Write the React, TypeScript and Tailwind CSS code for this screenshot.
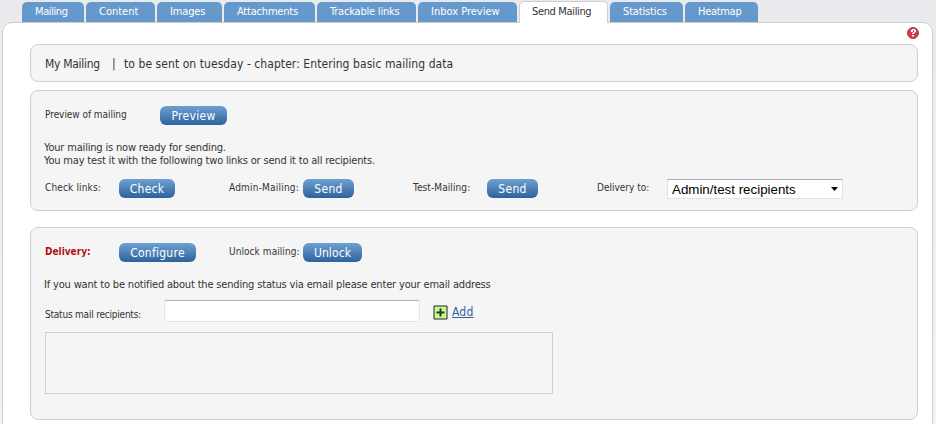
import React from "react";
import clsx from "clsx";

const tabs = [
  { label: "Mailing", size: "w-[62px] pl-[13px] tracking-[-0.4px]" },
  { label: "Content", size: "w-[69px] pl-[13px]" },
  { label: "Images", size: "w-[65px] pl-[13px] tracking-[-0.15px]" },
  { label: "Attachments", size: "w-[91px] pl-[13px] tracking-[-0.2px]" },
  { label: "Trackable links", size: "w-[99px] pl-[13px] tracking-[-0.2px]" },
  { label: "Inbox Preview", size: "w-[99px] pl-[13px]" },
  { label: "Send Mailing", size: "w-[89px] pl-[12px] tracking-[-0.35px]", active: true },
  { label: "Statistics", size: "w-[73px] pl-[13px] tracking-[-0.15px]" },
  { label: "Heatmap", size: "w-[73px] pl-[13px] tracking-[-0.3px]" },
];

function Tab({ label, size, active }: { label: string; size: string; active?: boolean }) {
  return (
    <a
      className={clsx(
        "block shrink-0 text-[11px]",
        size,
        active
          ? "relative mb-[-1px] h-[22px] rounded-t-[5px] border border-b-0 border-[#cfcfcf] bg-white leading-[20px] text-[#333]"
          : "h-[20px] rounded-t-[5px] bg-[#6699cb] leading-[20px] text-white"
      )}
    >
      {label}
    </a>
  );
}

function Button({ children, className }: { children: string; className: string }) {
  return (
    <button
      className={clsx(
        "block h-[19px] shrink-0 rounded-[6px] bg-linear-to-b from-[#6fa0d2] to-[#2c639c] text-center text-[12px] leading-[18px] text-white",
        className
      )}
    >
      {children}
    </button>
  );
}

function Label({ children, className }: { children: string; className: string }) {
  return <span className={clsx("block shrink-0 text-[10px] leading-[18px]", className)}>{children}</span>;
}

function Panel({ children, className }: { children: React.ReactNode; className: string }) {
  return (
    <section className={clsx("rounded-[8px] border border-[#cfcfcf] bg-[#f5f5f5] pl-[14px]", className)}>
      {children}
    </section>
  );
}

export default function App() {
  return (
    <div className="h-[424px] w-[936px] overflow-hidden whitespace-nowrap bg-linear-to-b from-[#e9eaee] to-[#f3f3f7] font-['DejaVu_Sans_Condensed','DejaVu_Sans',sans-serif] text-[#333] [font-stretch:condensed]">
      <nav className="flex h-[22px] items-end gap-[2px] pl-[22px]">
        {tabs.map((t) => (
          <Tab key={t.label} {...t} />
        ))}
      </nav>
      <main className="ml-[2px] h-[420px] w-[931px] rounded-t-[10px] border border-[#cfcfcf] bg-white pl-[27px] pr-[14px]">
        <div className="flex h-[21px] justify-end pt-[4px]">
          <svg width="12" height="12" viewBox="0 0 12 12" className="mr-[-1px]">
            <circle cx="6" cy="6" r="5.5" fill="#e8354f" stroke="#6b5566" />
            <path d="M4 5V3h1V2h3v1h1v2H8v1H7v1H5V6h1V5h1V3H6v2z" fill="#fff" />
            <path d="M5 8h2v1.6H5z" fill="#fff" />
          </svg>
        </div>
        <Panel className="flex h-[38px] w-[888px] text-[12px] leading-[38px]">
          <span className="w-[67px] tracking-[-0.3px]">My Mailing</span>
          <span className="w-[12px]">|</span>
          <span className="tracking-[0.065px]">to be sent on tuesday - chapter: Entering basic mailing data</span>
        </Panel>
        <Panel className="mt-[8px] h-[121px] w-[888px]">
          <div className="flex pt-[15px]">
            <Label className="w-[115px] tracking-[-0.05px]">Preview of mailing</Label>
            <Button className="w-[67px] tracking-[0.3px]">Preview</Button>
          </div>
          <p className="mt-[16px] ml-[-1px] h-[38px] text-[11px] leading-[13px] tracking-[-0.18px]">
            Your mailing is now ready for sending.
            <br />
            You may test it with the following two links or send it to all recipients.
          </p>
          <div className="flex">
            <Label className="w-[74px] tracking-[0.15px]">Check links:</Label>
            <Button className="w-[56px] tracking-[0.25px]">Check</Button>
            <Label className="ml-[54px] w-[74px] tracking-[0.2px]">Admin-Mailing:</Label>
            <Button className="w-[51px] tracking-[0.3px]">Send</Button>
            <Label className="ml-[59px] w-[74px] tracking-[0.1px]">Test-Mailing:</Label>
            <Button className="w-[51px] tracking-[0.3px]">Send</Button>
            <Label className="ml-[59px] w-[70px]">Delivery to:</Label>
            <div className="flex h-[20px] w-[176px] items-center justify-between rounded-[1px] border border-[#e2e3ea] border-t-[#abadb3] bg-white pr-[4px] pl-[4px] font-['Liberation_Sans',Arial,sans-serif] text-[13.33px] leading-[19px] text-black">
              <span>Admin/test recipients</span>
              <svg width="7" height="4" viewBox="0 0 7 4">
                <path d="M0 0h7L3.5 4z" fill="#000" />
              </svg>
            </div>
          </div>
        </Panel>
        <Panel className="mt-[16px] h-[193px] w-[888px]">
          <div className="flex pt-[15px]">
            <Label className="w-[74px] font-bold text-[#b01116]">Delivery:</Label>
            <Button className="w-[77px] tracking-[0.25px]">Configure</Button>
            <Label className="ml-[33px] w-[74px] tracking-[0.07px]">Unlock mailing:</Label>
            <Button className="w-[59px] tracking-[0.1px]">Unlock</Button>
          </div>
          <p className="mt-[16px] ml-[-1px] text-[11px] leading-[13px] tracking-[-0.172px]">
            If you want to be notified about the sending status via email please enter your email address
          </p>
          <div className="mt-[9px] flex h-[22px]">
            <Label className="w-[119px] pt-[6px] tracking-[-0.21px]">Status mail recipients:</Label>
            <input className="block h-[22px] w-[256px] rounded-[2px] border border-[#e2e3ea] border-t-[#abadb3] bg-white" />
            <svg width="15" height="15" viewBox="0 0 15 15" className="mt-[5px] ml-[13px]">
              <rect x="0.5" y="0.5" width="14" height="14" rx="1" fill="#222" />
              <rect x="1.5" y="1.5" width="12" height="12" fill="#c3fd8e" />
              <path d="M6.5 3.5h2v3h3v2h-3v3h-2v-3h-3v-2h3z" fill="#333" />
            </svg>
            <a className="ml-[4px] text-[12px] leading-[24px] text-[#33629a] underline tracking-[0.2px]">Add</a>
          </div>
          <div className="mt-[10px] h-[62px] w-[508px] border border-[#cfcfcf]" />
        </Panel>
      </main>
    </div>
  );
}
